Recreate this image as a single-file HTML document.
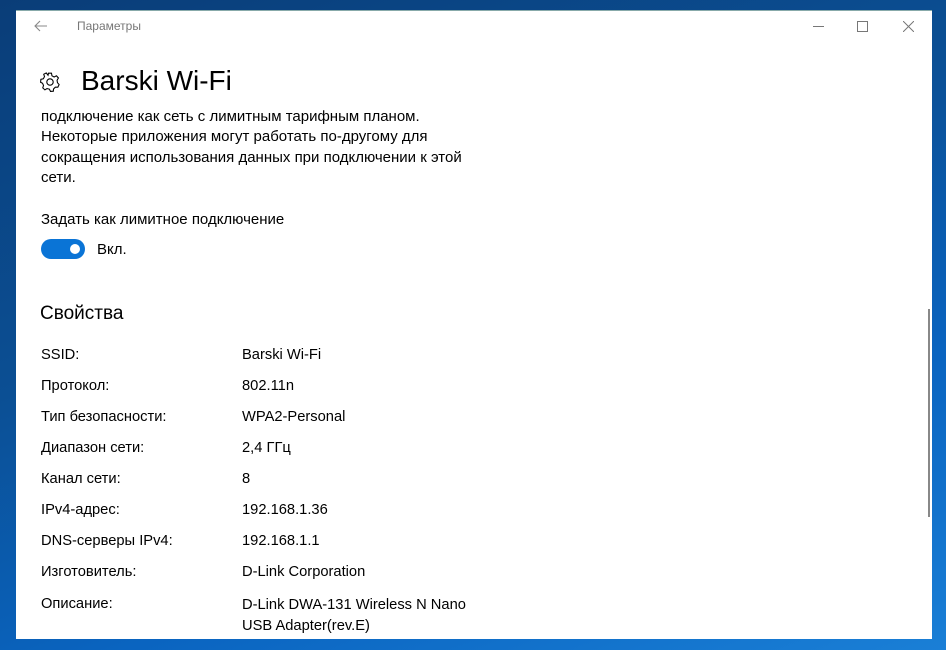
<!DOCTYPE html>
<html><head><meta charset="utf-8"><style>
body{margin:0;width:946px;height:650px;overflow:hidden;background:linear-gradient(160deg,#0a3d78 0%,#0b4f94 40%,#0a64c0 70%,#1a7fd6 100%);font-family:"Liberation Sans",sans-serif;color:#000;position:relative}
.win{position:absolute;left:16px;top:10px;width:916px;height:628px;background:#fff;border-top:1px solid #8aa}
.t{position:absolute;white-space:nowrap;font-size:15px}
.p{font-size:14.7px}
.g{color:#777}
</style></head><body>
<div class="win">
<svg style="position:absolute;left:18px;top:9px" width="14" height="12" viewBox="0 0 14 12"><path d="M13 6H1M6 1L1 6l5 5" stroke="#888" fill="none" stroke-width="1.1"/></svg>
<div class="t g" style="left:61px;top:8px;font-size:12px">Параметры</div>
<div style="position:absolute;left:797px;top:15px;width:11px;height:1px;background:#777"></div>
<div style="position:absolute;left:841px;top:10px;width:9px;height:9px;border:1px solid #777"></div>
<svg style="position:absolute;left:887px;top:10px" width="11" height="11"><path d="M0 0L11 11M11 0L0 11" stroke="#777"/></svg>
<svg style="position:absolute;left:24px;top:61px" width="20" height="20" viewBox="-10 -10 20 20"><g fill="none" stroke="#000" stroke-width="1.1"><path d="M-1.5,-9 L1.5,-9 L2,-6.3 L4.2,-5.1 L6.6,-6.3 L8.6,-4.1 L7.2,-1.8 L7.6,0.7 L9.3,2.6 L8,5.3 L5.4,5.3 L3.6,7.1 L3.4,9.4 L0.5,9.6 L-0.6,7.3 L-3,6.7 L-5.2,8 L-7.4,6 L-6.6,3.6 L-7.6,1.3 L-9.6,0.3 L-9.3,-2.7 L-6.8,-3.3 L-5.6,-5.5 L-6.4,-7.9 L-3.8,-9.3 L-2,-6.9 Z" transform="scale(0.98)"/><circle r="3.2"/></g></svg>
<div class="t" style="left:65px;top:54px;font-size:28px">Barski Wi-Fi</div>
<div class="t" style="left:25px;top:96px;line-height:20.3px">подключение как сеть с лимитным тарифным планом.<br>Некоторые приложения могут работать по-другому для<br>сокращения использования данных при подключении к этой<br>сети.</div>
<div class="t" style="left:25px;top:200px">Задать как лимитное подключение</div>
<div style="position:absolute;left:25px;top:228px;width:44px;height:20px;border-radius:10px;background:#0a74d6"></div>
<div style="position:absolute;left:54px;top:233px;width:10px;height:10px;border-radius:5px;background:#fff"></div>
<div class="t" style="left:81px;top:230px">Вкл.</div>
<div class="t" style="left:24px;top:292px;font-size:19px">Свойства</div>
<div class="t p" style="left:25px;top:336px">SSID:</div><div class="t p" style="left:226px;top:336px">Barski Wi-Fi</div>
<div class="t p" style="left:25px;top:367px">Протокол:</div><div class="t p" style="left:226px;top:367px">802.11n</div>
<div class="t p" style="left:25px;top:398px">Тип безопасности:</div><div class="t p" style="left:226px;top:398px">WPA2-Personal</div>
<div class="t p" style="left:25px;top:429px">Диапазон сети:</div><div class="t p" style="left:226px;top:429px">2,4 ГГц</div>
<div class="t p" style="left:25px;top:460px">Канал сети:</div><div class="t p" style="left:226px;top:460px">8</div>
<div class="t p" style="left:25px;top:491px">IPv4-адрес:</div><div class="t p" style="left:226px;top:491px">192.168.1.36</div>
<div class="t p" style="left:25px;top:522px">DNS-серверы IPv4:</div><div class="t p" style="left:226px;top:522px">192.168.1.1</div>
<div class="t p" style="left:25px;top:553px">Изготовитель:</div><div class="t p" style="left:226px;top:553px">D-Link Corporation</div>
<div class="t p" style="left:25px;top:585px">Описание:</div><div class="t p" style="left:226px;top:584px;line-height:20.5px">D-Link DWA-131 Wireless N Nano<br>USB Adapter(rev.E)</div>
<div style="position:absolute;left:912px;top:298px;width:2px;height:208px;background:#888"></div>
</div>
</body></html>
